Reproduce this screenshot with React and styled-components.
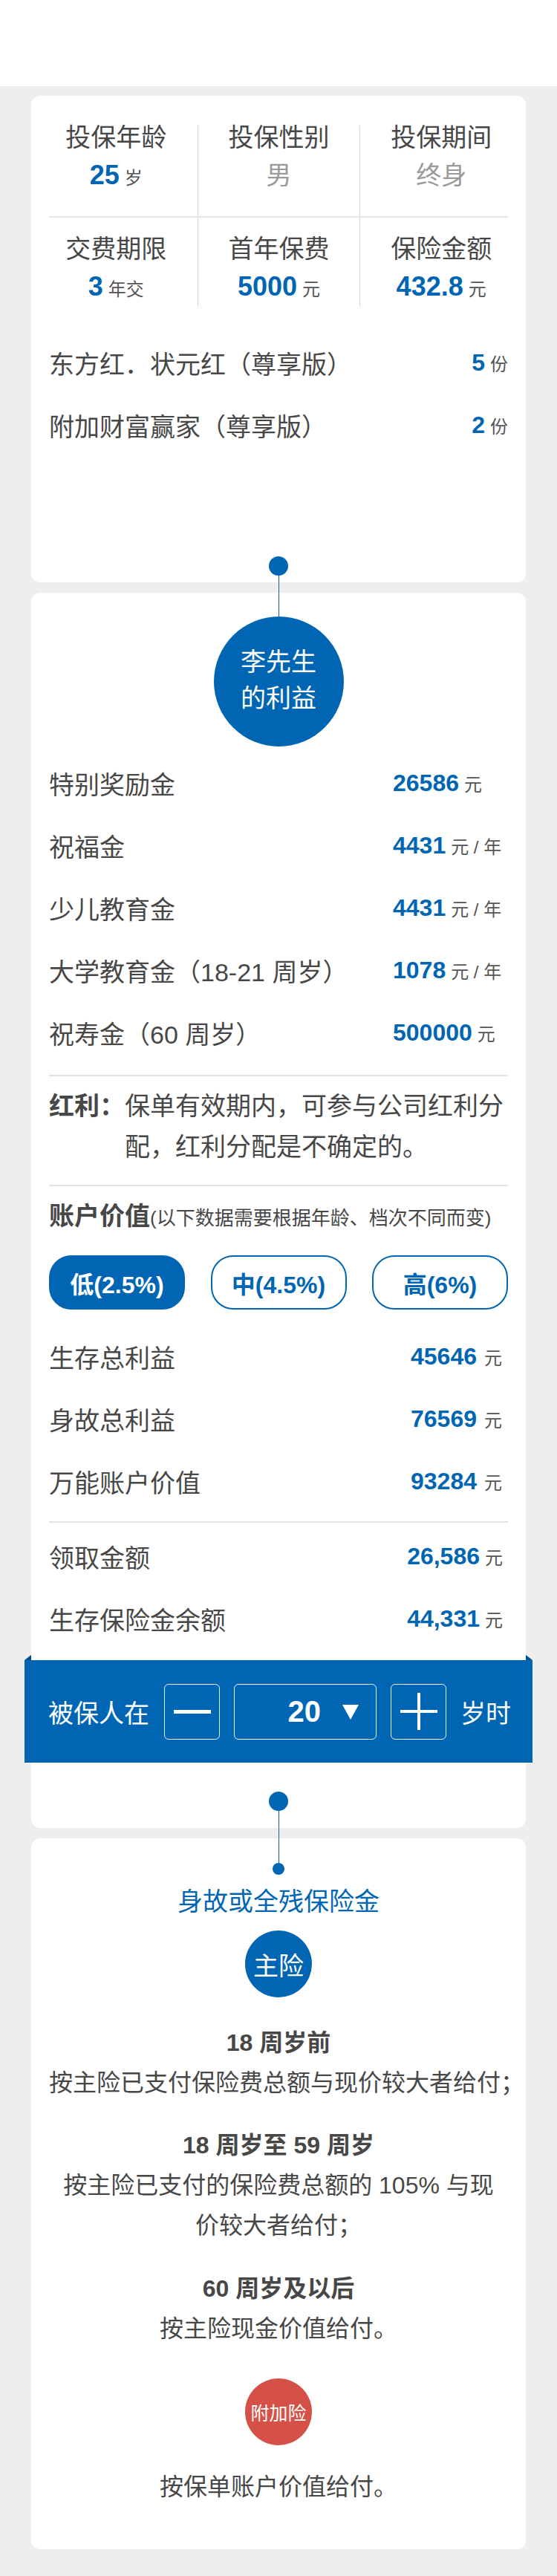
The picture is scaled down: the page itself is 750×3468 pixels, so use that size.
import React from 'react';
import styled, { createGlobalStyle } from 'styled-components';

const BLUE = '#0066b3';
const TEXT = '#474747';
const FONT = `"Liberation Sans", "Noto Sans CJK SC", sans-serif`;

const Global = createGlobalStyle`
  html, body { margin: 0; padding: 0; background: #eeeeee; }
  body { font-family: ${FONT}; color: ${TEXT}; }
  * { box-sizing: border-box; }
`;

const Page = styled.div`
  width: 750px;
  background: #eeeeee;
  padding-bottom: 39px;
`;

const Header = styled.header`
  height: 116px;
  background: #fff;
`;

const Card = styled.section`
  margin: ${p => (p.$first ? 13 : 14)}px 42px 0;
  background: #fff;
  border-radius: 12px;
  padding: ${p => p.$pad};
`;

/* ---------- card 1 ---------- */
const InfoGrid = styled.div`
  display: grid;
  grid-template-columns: repeat(3, 1fr);
  margin: 0 -19px;
`;

const InfoCell = styled.div`
  text-align: center;
  border-left: ${p => (p.$divider ? '1px solid #d9d9d9' : 'none')};
  padding: ${p => (p.$second ? '26px 0 6px' : '0 0 34px')};
`;

const GridRule = styled.div`
  grid-column: 1 / -1;
  height: 2px;
  margin: 0 19px;
  background: #e6e6e6;
`;

const InfoLabel = styled.div`
  height: 32px;
  font-size: 34px;
  line-height: 32px;
  color: ${TEXT};
`;

const InfoValue = styled.div`
  height: 42px;
  margin-top: 14px;
  line-height: 42px;
  font-size: 34px;
  color: #9a9a9a;
  white-space: nowrap;
`;

const Num = styled.span`
  font-weight: 700;
  font-size: ${p => p.$size || 32}px;
  color: ${BLUE};
`;

const Unit = styled.span`
  font-size: 24px;
  color: #555;
  margin-left: ${p => (p.$gap === undefined ? 7 : p.$gap)}px;
`;

const Products = styled.div`
  margin-top: 33px;
`;

const Row = styled.div`
  display: flex;
  align-items: center;
  justify-content: space-between;
  height: 84px;
`;

const Label = styled.span`
  font-size: 34px;
  color: ${TEXT};
  white-space: nowrap;
`;

const Value = styled.span`
  white-space: nowrap;
  width: ${p => (p.$left ? '155px' : 'auto')};
  text-align: ${p => (p.$left ? 'left' : 'right')};
  padding-right: ${p => p.$pr || 0}px;
`;

const Dot = styled.div`
  position: relative;
  width: ${p => p.$size}px;
  height: ${p => p.$size}px;
  border-radius: 50%;
  background: ${BLUE};
  margin: ${p => p.$mt || 0}px auto 0;
  &::after {
    content: '';
    position: absolute;
    left: 50%;
    top: 100%;
    width: 1px;
    margin-left: -0.5px;
    height: ${p => p.$line || 0}px;
    background: ${BLUE};
    z-index: 2;
  }
`;

/* ---------- card 2 ---------- */
const BigCircle = styled.div`
  width: 175px;
  height: 175px;
  margin: 0 auto;
  border-radius: 50%;
  background: ${BLUE};
  color: #fff;
  font-size: 34px;
  line-height: 49px;
  display: flex;
  flex-direction: column;
  align-items: center;
  justify-content: center;
  padding-bottom: 4px;
`;

const List = styled.div`
  margin-top: ${p => p.$mt || 0}px;
`;

const Rule = styled.div`
  height: 2px;
  background: #e3e3e3;
  margin-top: ${p => p.$mt}px;
`;

const Dividend = styled.div`
  display: flex;
  padding-top: 13px;
  font-size: 34px;
  line-height: 55px;
  color: ${TEXT};
`;

const DividendLabel = styled.span`
  font-weight: 700;
  white-space: nowrap;
`;

const DividendText = styled.span`
  flex: 1;
`;

const AccountTitle = styled.div`
  height: 44px;
  margin-top: 18px;
  line-height: 44px;
  white-space: nowrap;
  color: ${TEXT};
`;

const AccountStrong = styled.span`
  font-size: 34px;
  font-weight: 700;
`;

const AccountNote = styled.span`
  font-size: 26px;
`;

const Tabs = styled.div`
  margin-top: 31px;
  display: grid;
  grid-template-columns: repeat(3, 183px);
  justify-content: space-between;
`;

const Tab = styled.div`
  height: 73px;
  border-radius: 30px;
  border: 2px solid ${BLUE};
  background: ${p => (p.$active ? BLUE : '#fff')};
  color: ${p => (p.$active ? '#fff' : BLUE)};
  font-size: 32px;
  font-weight: 700;
  display: flex;
  align-items: center;
  justify-content: center;
`;

const AgeBar = styled.div`
  position: relative;
  margin: 14px -33px 0;
  height: 138px;
  background: ${BLUE};
  display: flex;
  align-items: center;
  gap: 19px;
  padding-left: 32px;
  color: #fff;
  font-size: 34px;
  &::before,
  &::after {
    content: '';
    position: absolute;
    top: -7px;
    border-bottom: 7px solid #00508f;
  }
  &::before {
    left: 0;
    border-left: 9px solid transparent;
  }
  &::after {
    right: 0;
    border-right: 9px solid transparent;
  }
`;

const BarText = styled.span`
  white-space: nowrap;
  margin-right: ${p => p.$mr || 0}px;
`;

const StepBtn = styled.div`
  position: relative;
  width: 75px;
  height: 75px;
  border: 1px solid rgba(255, 255, 255, 0.9);
  border-radius: 6px;
  display: flex;
  align-items: center;
  justify-content: center;
`;

const HBar = styled.span`
  width: 50px;
  height: ${p => p.$t}px;
  background: #fff;
`;

const VBar = styled.span`
  position: absolute;
  left: 50%;
  top: 50%;
  width: 4px;
  height: 50px;
  margin: -25px 0 0 -2px;
  background: #fff;
`;

const Select = styled.div`
  width: 192px;
  height: 75px;
  border: 1px solid rgba(255, 255, 255, 0.9);
  border-radius: 6px;
  display: flex;
  align-items: center;
  justify-content: flex-end;
  gap: 29px;
  padding-right: 23px;
`;

const SelectNum = styled.span`
  font-size: 40px;
  font-weight: 700;
`;

const Caret = styled.span`
  width: 0;
  height: 0;
  border-left: 11.5px solid transparent;
  border-right: 11.5px solid transparent;
  border-top: 20px solid #fff;
  margin-top: 2px;
`;

/* ---------- card 3 ---------- */
const Center = styled.div`
  text-align: center;
`;

const BlueTitle = styled.div`
  height: 44px;
  margin-top: 14px;
  font-size: 34px;
  line-height: 44px;
  color: ${BLUE};
`;

const Badge = styled.div`
  width: 90px;
  height: 90px;
  border-radius: 50%;
  margin: ${p => p.$mt}px auto 0;
  background: ${p => (p.$red ? '#d55148' : BLUE)};
  color: #fff;
  font-size: ${p => (p.$red ? 25 : 34)}px;
  display: flex;
  align-items: center;
  justify-content: center;
  white-space: nowrap;
`;

const Block = styled.div`
  margin-top: ${p => p.$mt}px;
  font-size: 32px;
  line-height: 54px;
  color: ${TEXT};
`;

const Heading = styled.div`
  height: 54px;
  font-weight: 700;
`;

const Body = styled.div`
  height: 54px;
  white-space: nowrap;
`;

const topRows = [
  ['特别奖励金', '26586', '元'],
  ['祝福金', '4431', '元 / 年'],
  ['少儿教育金', '4431', '元 / 年'],
  ['大学教育金（18-21 周岁）', '1078', '元 / 年'],
  ['祝寿金（60 周岁）', '500000', '元'],
];

const accountRows = [
  ['生存总利益', '45646'],
  ['身故总利益', '76569'],
  ['万能账户价值', '93284'],
];

const drawRows = [
  ['领取金额', '26,586'],
  ['生存保险金余额', '44,331'],
];

export default function App() {
  return (
    <Page>
      <Global />
      <Header />

      <Card $first $pad="40px 24px 9px">
        <InfoGrid>
          <InfoCell>
            <InfoLabel>投保年龄</InfoLabel>
            <InfoValue><Num $size={36}>25</Num><Unit>岁</Unit></InfoValue>
          </InfoCell>
          <InfoCell $divider>
            <InfoLabel>投保性别</InfoLabel>
            <InfoValue>男</InfoValue>
          </InfoCell>
          <InfoCell $divider>
            <InfoLabel>投保期间</InfoLabel>
            <InfoValue>终身</InfoValue>
          </InfoCell>
          <GridRule />
          <InfoCell $second>
            <InfoLabel>交费期限</InfoLabel>
            <InfoValue><Num $size={36}>3</Num><Unit>年交</Unit></InfoValue>
          </InfoCell>
          <InfoCell $second $divider>
            <InfoLabel>首年保费</InfoLabel>
            <InfoValue><Num $size={36}>5000</Num><Unit>元</Unit></InfoValue>
          </InfoCell>
          <InfoCell $second $divider>
            <InfoLabel>保险金额</InfoLabel>
            <InfoValue><Num $size={36}>432.8</Num><Unit>元</Unit></InfoValue>
          </InfoCell>
        </InfoGrid>

        <Products>
          <Row>
            <Label>东方红．状元红（尊享版）</Label>
            <Value><Num>5</Num><Unit>份</Unit></Value>
          </Row>
          <Row>
            <Label>附加财富赢家（尊享版）</Label>
            <Value><Num>2</Num><Unit>份</Unit></Value>
          </Row>
        </Products>

        <Dot $size={26} $mt={135} $line={55} />
      </Card>

      <Card $pad="32px 24px 23px">
        <BigCircle>
          <span>李先生</span>
          <span>的利益</span>
        </BigCircle>

        <List $mt={7}>
          {topRows.map(([l, n, u]) => (
            <Row key={l}>
              <Label>{l}</Label>
              <Value $left><Num>{n}</Num><Unit>{u}</Unit></Value>
            </Row>
          ))}
        </List>

        <Rule $mt={15} />

        <Dividend>
          <DividendLabel>红利：</DividendLabel>
          <DividendText>保单有效期内，可参与公司红利分配，红利分配是不确定的。</DividendText>
        </Dividend>

        <Rule $mt={23} />

        <AccountTitle>
          <AccountStrong>账户价值</AccountStrong>
          <AccountNote>(以下数据需要根据年龄、档次不同而变)</AccountNote>
        </AccountTitle>

        <Tabs>
          <Tab $active>低(2.5%)</Tab>
          <Tab>中(4.5%)</Tab>
          <Tab>高(6%)</Tab>
        </Tabs>

        <List $mt={21}>
          {accountRows.map(([l, n]) => (
            <Row key={l}>
              <Label>{l}</Label>
              <Value $pr={8}><Num>{n}</Num><Unit $gap={10}>元</Unit></Value>
            </Row>
          ))}
        </List>

        <Rule $mt={12} />

        <List $mt={3}>
          {drawRows.map(([l, n]) => (
            <Row key={l}>
              <Label>{l}</Label>
              <Value $pr={7}><Num>{n}</Num><Unit>元</Unit></Value>
            </Row>
          ))}
        </List>

        <AgeBar>
          <BarText $mr={1}>被保人在</BarText>
          <StepBtn><HBar $t={5} /></StepBtn>
          <Select>
            <SelectNum>20</SelectNum>
            <Caret />
          </Select>
          <StepBtn><HBar $t={4} /><VBar /></StepBtn>
          <BarText>岁时</BarText>
        </AgeBar>

        <Dot $size={26} $mt={39} $line={70} />
      </Card>

      <Card $pad="33px 24px 57px">
        <Center>
          <Dot $size={16} />
          <BlueTitle>身故或全残保险金</BlueTitle>
          <Badge $mt={17}>主险</Badge>

          <Block $mt={34}>
            <Heading>18 周岁前</Heading>
            <Body>按主险已支付保险费总额与现价较大者给付；</Body>
          </Block>

          <Block $mt={30}>
            <Heading>18 周岁至 59 周岁</Heading>
            <Body>按主险已支付的保险费总额的 105% 与现</Body>
            <Body>价较大者给付；</Body>
          </Block>

          <Block $mt={31}>
            <Heading>60 周岁及以后</Heading>
            <Body>按主险现金价值给付。</Body>
          </Block>

          <Badge $red $mt={40}>附加险</Badge>

          <Block $mt={29}>
            <Body>按保单账户价值给付。</Body>
          </Block>
        </Center>
      </Card>
    </Page>
  );
}
